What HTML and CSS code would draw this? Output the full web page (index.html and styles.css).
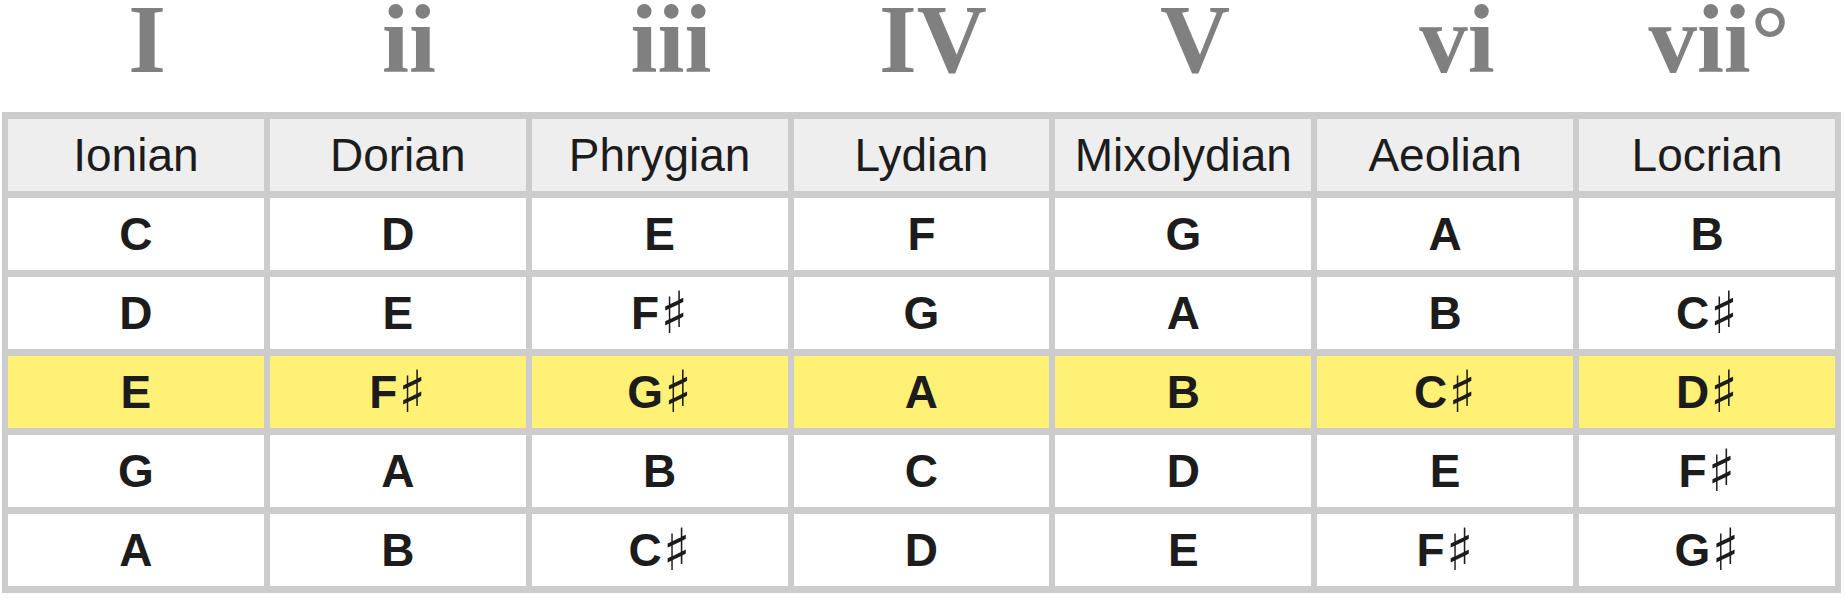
FILE: index.html
```html
<!DOCTYPE html>
<html lang="en">
<head>
  <meta charset="UTF-8">
  <title>Modes of E major</title>
  <link rel="stylesheet" href="styles.css">
</head>
<body>
  <div class="numerals">
    <div class="num">I</div>
    <div class="num">ii</div>
    <div class="num">iii</div>
    <div class="num">IV</div>
    <div class="num">V</div>
    <div class="num">vi</div>
    <div class="num">vii°</div>
  </div>
  <table class="modes">
    <thead>
      <tr>
        <th>Ionian</th>
        <th>Dorian</th>
        <th>Phrygian</th>
        <th>Lydian</th>
        <th>Mixolydian</th>
        <th>Aeolian</th>
        <th>Locrian</th>
      </tr>
    </thead>
    <tbody>
      <tr>
        <td>C</td><td>D</td><td>E</td><td>F</td><td>G</td><td>A</td><td>B</td>
      </tr>
      <tr>
        <td>D</td><td>E</td><td>F<span class="sharp">♯</span></td><td>G</td><td>A</td><td>B</td><td>C<span class="sharp">♯</span></td>
      </tr>
      <tr class="hl">
        <td>E</td><td>F<span class="sharp">♯</span></td><td>G<span class="sharp">♯</span></td><td>A</td><td>B</td><td>C<span class="sharp">♯</span></td><td>D<span class="sharp">♯</span></td>
      </tr>
      <tr>
        <td>G</td><td>A</td><td>B</td><td>C</td><td>D</td><td>E</td><td>F<span class="sharp">♯</span></td>
      </tr>
      <tr>
        <td>A</td><td>B</td><td>C<span class="sharp">♯</span></td><td>D</td><td>E</td><td>F<span class="sharp">♯</span></td><td>G<span class="sharp">♯</span></td>
      </tr>
    </tbody>
  </table>
</body>
</html>
```

FILE: styles.css
```css
* {
  margin: 0;
  padding: 0;
}

html,
body {
  background-color: #fff;
  overflow: hidden;
}

.numerals {
  display: grid;
  grid-template-columns: repeat(7, 262px);
  height: 112px;
  padding-left: 16px;
  overflow: hidden;
  font-family: "Liberation Serif", "Times New Roman", serif;
  font-weight: bold;
  font-size: 97px;
  line-height: 79px;
  color: #808080;
}

.numerals .num {
  text-align: center;
  white-space: nowrap;
}

.modes {
  width: 1839px;
  margin-left: 2px;
  border-collapse: separate;
  border-spacing: 6px 7px;
  background-color: #ccc;
  table-layout: fixed;
  font-family: "Liberation Sans", Arial, "DejaVu Sans", sans-serif;
  font-size: 46px;
  color: #1c1c1c;
}

.modes th,
.modes td {
  height: 72px;
  padding: 0;
  text-align: center;
  vertical-align: middle;
  background-color: #fff;
}

.modes th {
  font-weight: normal;
  background-color: #eee;
}

.modes td {
  font-weight: bold;
}

.modes tr.hl td {
  background-color: #fff176;
}

.modes .sharp {
  display: inline-block;
  font-family: "DejaVu Sans", sans-serif;
  font-weight: normal;
  font-size: 58px;
  line-height: 0;
  vertical-align: -4px;
  margin-left: 1px;
}
```
